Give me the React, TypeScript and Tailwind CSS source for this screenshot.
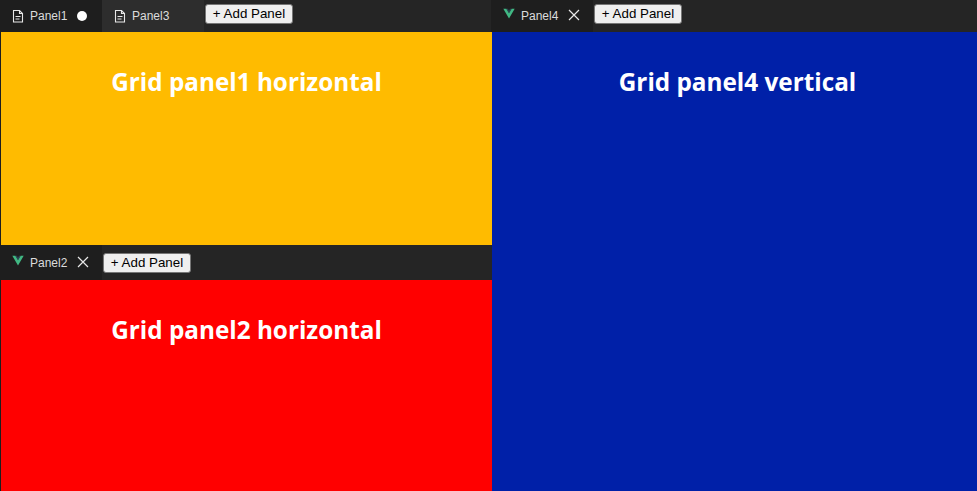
import React from "react";

function FileIcon() {
  return (
    <svg width="14" height="14" viewBox="0 0 14 14" fill="none" stroke="#e8e8e8" strokeWidth="1.1" className="shrink-0 -ml-[1px]">
      <path d="M2.5 1.5h6l3 3v8.5h-9z" />
      <path d="M8.5 1.5v3h3" />
      <path d="M4.5 7.5h5M4.5 10h4" />
    </svg>
  );
}

function VueIcon() {
  return (
    <svg width="12" height="11" viewBox="0 0 12 11" className="shrink-0 -mt-[5px]">
      <path d="M0.3 0.8h3L6 5.2 8.7 0.8h3L6 10.6z" fill="#41b883" />
      <path d="M3.3 0.8h1.6L6 2.8 7.1 0.8h1.6L6 5.2z" fill="#35667f" opacity="0.55" />
    </svg>
  );
}

function Close() {
  return (
    <svg width="12" height="12" viewBox="0 0 12 12" stroke="#e8e8e8" strokeWidth="1.2" className="shrink-0 -mt-[2px]">
      <path d="M1 1l10 10M11 1L1 11" />
    </svg>
  );
}

function Tab({ label, icon, end, bg }: { label: string; icon: React.ReactNode; end?: React.ReactNode; bg: string }) {
  return (
    <div className={`flex items-center h-full w-[102px] pl-3 ${bg}`}>
      <span className="w-[18px] flex items-center">{icon}</span>
      <span className="text-[12px] text-[#dcdcdc] w-[47px] font-['Liberation_Sans',sans-serif]">{label}</span>
      {end}
    </div>
  );
}

function AddPanel({ raised }: { raised?: boolean }) {
  return (
    <button className={`ml-[1px] h-[20px] w-[88px] bg-[#efefef] border border-[#767676] rounded-[3px] text-[13.33px] text-black font-['Liberation_Sans',sans-serif] leading-none ${raised ? "-mt-[4px]" : ""}`}>
      + Add Panel
    </button>
  );
}

function Heading({ children, shifted }: { children: React.ReactNode; shifted?: boolean }) {
  return (
    <h1 className={`text-center text-white font-bold text-[24.3px] leading-[32px] pt-[34px] font-['Open_Sans',sans-serif] ${shifted ? "pl-[6px]" : ""}`}>
      {children}
    </h1>
  );
}

const Dot = () => <span className="block w-[10px] h-[10px] rounded-full bg-white -mt-[1px]" />;

export default function App() {
  return (
    <div className="flex w-[977px] h-[491px] overflow-hidden bg-[#1e1e1e]">
      <div className="flex flex-col w-[491px] ml-[1px] shrink-0">
        <div className="flex items-center h-[32px] shrink-0 bg-[#252525] -ml-[1px]">
          <Tab label="Panel1" icon={<FileIcon />} end={<Dot />} bg="bg-[#1e1e1e]" />
          <Tab label="Panel3" icon={<FileIcon />} bg="bg-[#2d2d2d]" />
          <AddPanel raised />
        </div>
        <div className="h-[213px] bg-[#ffbb00] shrink-0">
          <Heading>Grid panel1 horizontal</Heading>
        </div>
        <div className="flex items-center h-[35px] shrink-0 bg-[#252525] -ml-[1px]">
          <Tab label="Panel2" icon={<VueIcon />} end={<Close />} bg="bg-[#1e1e1e]" />
          <AddPanel />
        </div>
        <div className="flex-1 bg-[#ff0000]">
          <Heading>Grid panel2 horizontal</Heading>
        </div>
      </div>
      <div className="flex flex-col flex-1">
        <div className="flex items-center h-[32px] shrink-0 bg-[#252525] -ml-[1px]">
          <Tab label="Panel4" icon={<VueIcon />} end={<Close />} bg="bg-[#1e1e1e]" />
          <AddPanel raised />
        </div>
        <div className="flex-1 bg-[#0020a8]">
          <Heading shifted>Grid panel4 vertical</Heading>
        </div>
      </div>
    </div>
  );
}
